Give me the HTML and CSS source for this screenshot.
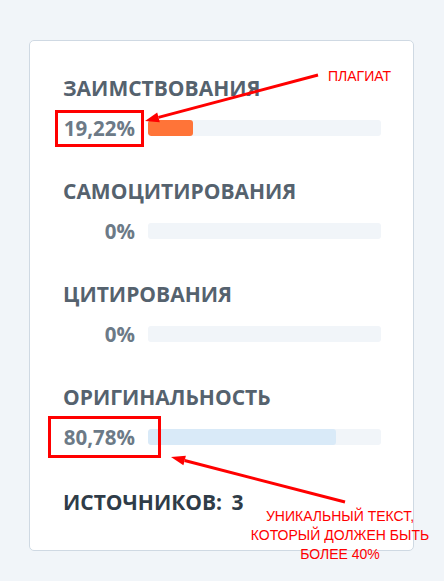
FILE: index.html
```html
<!DOCTYPE html>
<html>
  <head>
    <title>Отчёт о проверке</title>
    <link rel="stylesheet" href="styles.css">
  </head>
  <body>
    <div class="page">
      <div class="report-card">
        <div class="stat">
          <div class="stat-title">ЗАИМСТВОВАНИЯ</div>
          <div class="stat-row">
            <div class="stat-value">19,22%</div>
            <div class="bar-bg"><div class="bar bar-borrow" style="width: 19.22%;"></div></div>
          </div>
        </div>
        <div class="stat">
          <div class="stat-title">САМОЦИТИРОВАНИЯ</div>
          <div class="stat-row">
            <div class="stat-value">0%</div>
            <div class="bar-bg"><div class="bar" style="width: 0%;"></div></div>
          </div>
        </div>
        <div class="stat">
          <div class="stat-title">ЦИТИРОВАНИЯ</div>
          <div class="stat-row">
            <div class="stat-value">0%</div>
            <div class="bar-bg"><div class="bar" style="width: 0%;"></div></div>
          </div>
        </div>
        <div class="stat">
          <div class="stat-title">ОРИГИНАЛЬНОСТЬ</div>
          <div class="stat-row">
            <div class="stat-value">80,78%</div>
            <div class="bar-bg"><div class="bar bar-original" style="width: 80.78%;"></div></div>
          </div>
        </div>
        <div class="sources">ИСТОЧНИКОВ: <span class="sources-count">3</span></div>
      </div>
    </div>

    <!-- annotations drawn over the screenshot -->
    <svg class="marks" width="444" height="581" viewBox="0 0 444 581">
      <rect x="56.5" y="111.5" width="86" height="34" fill="none" stroke="#ff0000" stroke-width="3"/>
      <line x1="318" y1="75" x2="158.5" y2="117.4" stroke="#ff0000" stroke-width="3"/>
      <polygon points="145,121 159.8,122.2 157.2,112.6" fill="#ff0000"/>

      <rect x="49.5" y="417.5" width="110" height="39" fill="none" stroke="#ff0000" stroke-width="3"/>
      <line x1="345" y1="502" x2="184.6" y2="460.5" stroke="#ff0000" stroke-width="3"/>
      <polygon points="171,457 185.9,455.7 183.4,465.3" fill="#ff0000"/>
    </svg>
    <div class="note note-plagiat">ПЛАГИАТ</div>
    <div class="note note-unique">УНИКАЛЬНЫЙ ТЕКСТ,<br>КОТОРЫЙ ДОЛЖЕН БЫТЬ<br>БОЛЕЕ 40%</div>
  </body>
</html>
```

FILE: styles.css
```css
body {
  margin: 0;
  background-color: #f1f5f9;
  font-family: 'Open Sans', 'Noto Sans', sans-serif;
}
.page {
  padding: 40px 30px 30px 29px;
}
.report-card {
  width: 385px;
  box-sizing: border-box;
  background-color: white;
  border: 1px solid #cfd9e3;
  border-radius: 5px;
  padding: 35px 30px 36px 33px;
}
.stat {
  margin-bottom: 41px;
}
.stat-title {
  font-size: 21px;
  line-height: 24px;
  font-weight: bold;
  color: #55626e;
}
.stat-row {
  display: flex;
  align-items: center;
  gap: 13px;
  margin-top: 18px;
}
.stat-value {
  width: 72px;
  flex-shrink: 0;
  text-align: right;
  font-size: 20.5px;
  line-height: 20px;
  font-weight: bold;
  color: #6c7a87;
}
.bar-bg {
  width: 233px;
  flex-shrink: 0;
  height: 16px;
  background-color: #f1f5f9;
  border-radius: 3px;
  overflow: hidden;
}
.bar {
  height: 100%;
  border-radius: 3px;
}
.bar-borrow {
  background-color: #ff7438;
}
.bar-original {
  background-color: #d9eaf8;
}
.sources {
  margin-top: 43px;
  font-size: 21px;
  line-height: 24px;
  font-weight: bold;
  color: #2f3c48;
}
.sources-count {
  margin-left: 4px;
}

/* red annotations */
.marks {
  position: absolute;
  left: 0;
  top: 0;
}
.note {
  position: absolute;
  font-family: 'Liberation Sans', Arial, sans-serif;
  font-size: 14px;
  line-height: 19px;
  color: #ff0000;
}
.note-plagiat {
  left: 328px;
  top: 67px;
}
.note-unique {
  left: 240px;
  top: 507px;
  width: 200px;
  text-align: center;
}
```
